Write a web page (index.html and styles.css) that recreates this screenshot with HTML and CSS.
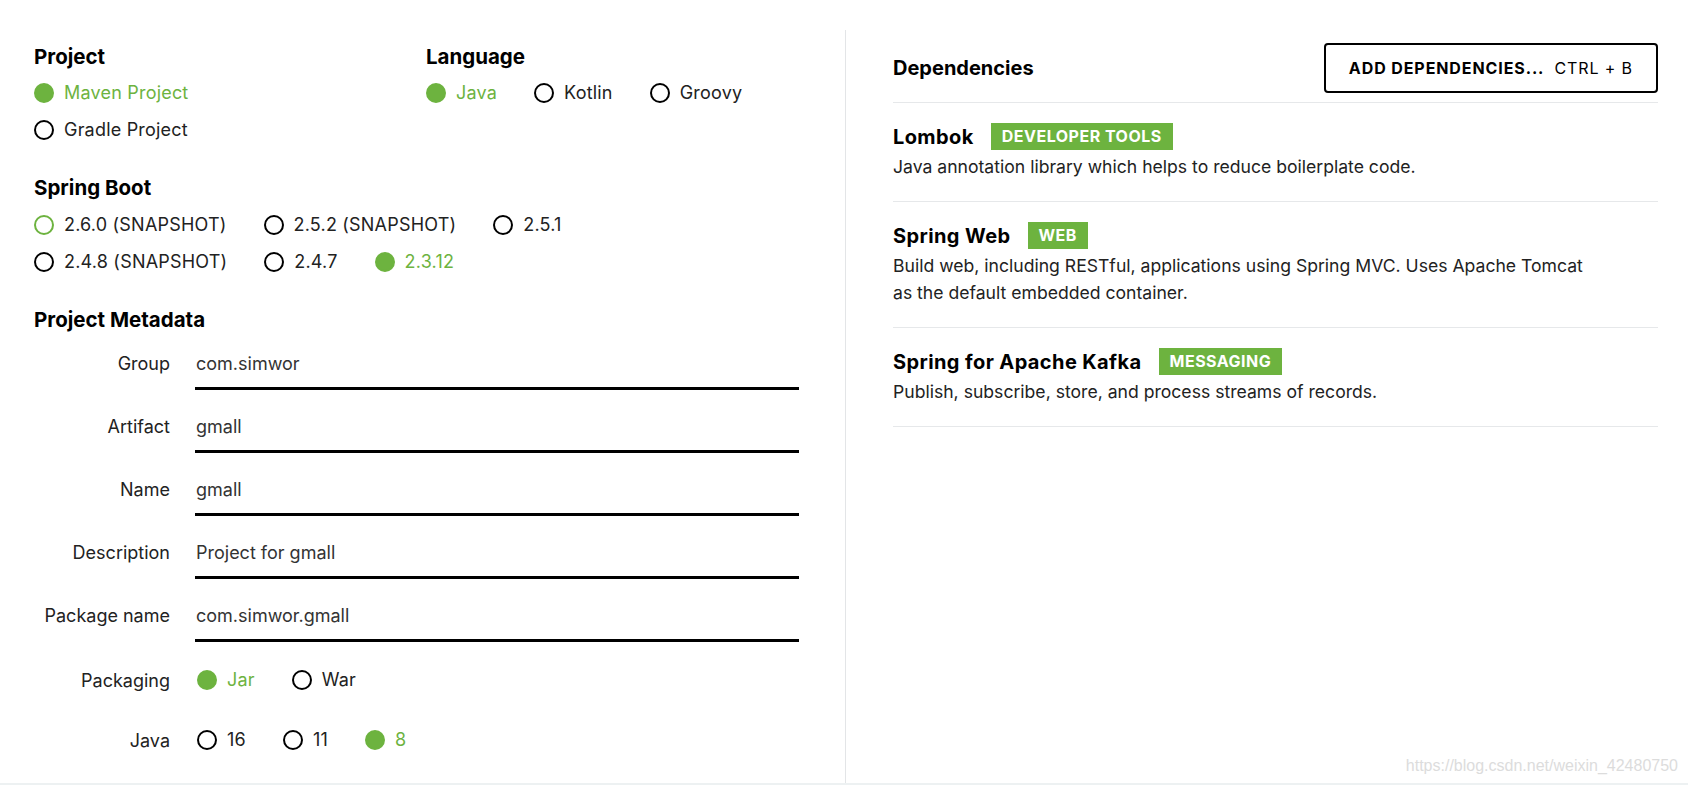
FILE: index.html
```html
<!DOCTYPE html>
<html lang="en">
<head>
<meta charset="utf-8">
<title>Spring Initializr</title>
<link rel="stylesheet" href="styles.css">
</head>
<body>
<div class="page">
  <div class="cols">
    <div class="left">
      <div class="top-grid">
        <section class="group">
          <h2 class="heading">Project</h2>
          <div class="radio-row"><label class="radio checked"><span class="dot"></span><span class="txt">Maven Project</span></label></div>
          <div class="radio-row"><label class="radio"><span class="dot"></span><span class="txt">Gradle Project</span></label></div>
        </section>
        <section class="group">
          <h2 class="heading">Language</h2>
          <div class="radio-row">
            <label class="radio checked"><span class="dot"></span><span class="txt">Java</span></label>
            <label class="radio"><span class="dot"></span><span class="txt">Kotlin</span></label>
            <label class="radio"><span class="dot"></span><span class="txt">Groovy</span></label>
          </div>
        </section>
      </div>
      <section class="group section">
        <h2 class="heading">Spring Boot</h2>
        <div class="radio-row">
          <label class="radio focus"><span class="dot"></span><span class="txt">2.6.0 (SNAPSHOT)</span></label>
          <label class="radio"><span class="dot"></span><span class="txt">2.5.2 (SNAPSHOT)</span></label>
          <label class="radio"><span class="dot"></span><span class="txt">2.5.1</span></label>
        </div>
        <div class="radio-row">
          <label class="radio"><span class="dot"></span><span class="txt">2.4.8 (SNAPSHOT)</span></label>
          <label class="radio"><span class="dot"></span><span class="txt">2.4.7</span></label>
          <label class="radio checked"><span class="dot"></span><span class="txt">2.3.12</span></label>
        </div>
      </section>
      <section class="group section">
        <h2 class="heading">Project Metadata</h2>
        <div class="meta">
          <div class="meta-row"><span class="meta-label">Group</span><span class="field">com.simwor</span></div>
          <div class="meta-row"><span class="meta-label">Artifact</span><span class="field">gmall</span></div>
          <div class="meta-row"><span class="meta-label">Name</span><span class="field">gmall</span></div>
          <div class="meta-row"><span class="meta-label">Description</span><span class="field">Project for gmall</span></div>
          <div class="meta-row"><span class="meta-label">Package name</span><span class="field">com.simwor.gmall</span></div>
          <div class="meta-row radio-meta"><span class="meta-label">Packaging</span>
            <div class="radio-row">
              <label class="radio checked"><span class="dot"></span><span class="txt">Jar</span></label>
              <label class="radio"><span class="dot"></span><span class="txt">War</span></label>
            </div>
          </div>
          <div class="meta-row radio-meta"><span class="meta-label">Java</span>
            <div class="radio-row">
              <label class="radio"><span class="dot"></span><span class="txt">16</span></label>
              <label class="radio"><span class="dot"></span><span class="txt">11</span></label>
              <label class="radio checked"><span class="dot"></span><span class="txt">8</span></label>
            </div>
          </div>
        </div>
      </section>
    </div>
    <div class="right">
      <div class="dep-header">
        <h2 class="dep-heading">Dependencies</h2>
        <button class="add-btn"><strong>ADD DEPENDENCIES...</strong><span class="kbd">CTRL + B</span></button>
      </div>
      <div class="dep">
        <div class="dep-title"><span class="dep-name">Lombok</span><span class="badge">DEVELOPER TOOLS</span></div>
        <p class="dep-desc">Java annotation library which helps to reduce boilerplate code.</p>
      </div>
      <div class="dep">
        <div class="dep-title"><span class="dep-name">Spring Web</span><span class="badge">WEB</span></div>
        <p class="dep-desc">Build web, including RESTful, applications using Spring MVC. Uses Apache Tomcat<br>as the default embedded container.</p>
      </div>
      <div class="dep">
        <div class="dep-title"><span class="dep-name">Spring for Apache Kafka</span><span class="badge">MESSAGING</span></div>
        <p class="dep-desc">Publish, subscribe, store, and process streams of records.</p>
      </div>
    </div>
  </div>
  <div class="footer-strip"></div>
  <div class="watermark">https://blog.csdn.net/weixin_42480750</div>
</div>
</body>
</html>
```

FILE: styles.css
```css
* { box-sizing: border-box; }
html, body { margin: 0; padding: 0; background: #fff; }
body {
  font-family: Inter, "Noto Sans", "Liberation Sans", sans-serif;
  color: #222;
  width: 1688px;
  height: 785px;
  overflow: hidden;
}
.page {
  position: relative;
  height: 785px;
  padding-top: 30px;
}
.cols {
  display: flex;
  height: 753px;
}
.left {
  width: 846px;
  border-right: 1px solid #e3e5e7;
  padding: 15px 0 0 34px;
}
.right {
  flex: 1;
  padding: 13px 30px 0 47px;
}
.top-grid {
  display: grid;
  grid-template-columns: 392px 1fr;
}
.heading {
  margin: 0 0 5px;
  font-size: 20.5px;
  line-height: 24px;
  font-weight: 700;
  color: #000;
}
.section { margin-top: 28px; }
.section .heading { margin-bottom: 6px; }
.radio-row {
  display: flex;
  align-items: center;
  height: 37px;
}
.radio {
  display: flex;
  align-items: center;
  margin-right: 37px;
  font-size: 18px;
  line-height: 24px;
  color: #222;
}
.radio .txt { letter-spacing: 0.2px; }
.radio:last-child { margin-right: 0; }
.dot {
  width: 20px;
  height: 20px;
  border-radius: 50%;
  border: 2px solid #000;
  margin-right: 10px;
  flex: none;
}
.radio.checked .dot { background: #6db33f; border-color: #6db33f; }
.radio.checked .txt { color: #6db33f; }
.radio.focus .dot { border-color: #6db33f; }

.meta { margin-top: 12px; }
.meta-row {
  display: flex;
  margin-bottom: 17px;
}
.meta-label {
  width: 136px;
  text-align: right;
  padding-top: 8px;
  font-size: 18px;
  line-height: 24px;
  color: #222;
  margin-right: 25px;
  flex: none;
}
.field {
  width: 604px;
  padding: 8px 0 11px 1px;
  font-size: 18px;
  line-height: 24px;
  color: #333;
  border-bottom: 3px solid #000;
}
.radio-meta { padding: 3px 0 4px; }
.radio-meta .meta-label { padding-top: 7px; }
.radio-meta .radio-row { height: 36px; margin-left: 2px; }

.dep-header {
  display: flex;
  align-items: center;
  justify-content: space-between;
  padding-bottom: 9px;
  border-bottom: 1px solid #e6e8ea;
}
.dep-heading {
  margin: 0;
  font-size: 20px;
  line-height: 24px;
  font-weight: 700;
  color: #000;
}
.add-btn {
  height: 50px;
  padding: 0 23px 0 23px;
  border: 2px solid #000;
  border-radius: 4px;
  background: #fff;
  font-family: inherit;
  font-size: 16px;
  letter-spacing: 0.9px;
  color: #000;
  display: flex;
  align-items: center;
}
.add-btn strong { font-weight: 700; }
.kbd { margin-left: 10px; font-weight: 400; }

.dep {
  padding: 20px 0 21px;
  border-bottom: 1px solid #e6e8ea;
}
.dep-title {
  display: flex;
  align-items: center;
  height: 27px;
}
.dep-name {
  font-size: 20px;
  letter-spacing: 0.4px;
  font-weight: 700;
  color: #000;
  margin-right: 17px;
}
.badge {
  height: 27px;
  padding: 0 11px;
  background: #6db33f;
  color: #fff;
  font-size: 16px;
  letter-spacing: 0.5px;
  font-weight: 700;
  line-height: 27px;
}
.dep-desc {
  margin: 3px 0 0;
  font-size: 17.6px;
  line-height: 27px;
  color: #222;
}
.footer-strip {
  height: 2px;
  background: #edf1f2;
}
.watermark {
  position: absolute;
  right: 10px;
  bottom: 9px;
  font-family: "Liberation Sans", Arial, sans-serif;
  font-size: 16px;
  line-height: 20px;
  color: #dcdcdc;
}
```
